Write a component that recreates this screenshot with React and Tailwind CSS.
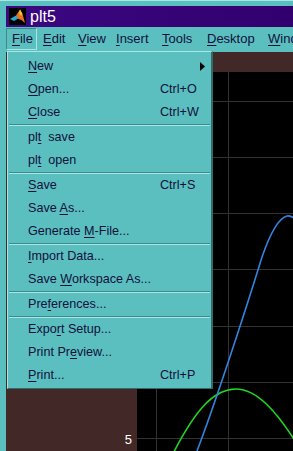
import React from 'react';

const MENUBAR = [
  { label: 'File', u: 0, w: 'w-[31px] pl-[5px] border border-t-[#3a8c8c] border-l-[#3a8c8c] border-r-[#a9e6e6] border-b-[#a9e6e6]' },
  { label: 'Edit', u: 0, w: 'w-[35px] pl-[6px]' },
  { label: 'View', u: 0, w: 'w-[38px] pl-[6px]' },
  { label: 'Insert', u: 0, w: 'w-[46px] pl-[6px]' },
  { label: 'Tools', u: 0, w: 'w-[45px] pl-[6px]' },
  { label: 'Desktop', u: 0, w: 'w-[61px] pl-[6px]' },
  { label: 'Window', u: 0, w: 'w-[60px] pl-[6px]' },
];

// null = separator
const ITEMS = [
  { label: 'New', u: 0, sub: true },
  { label: 'Open...', u: 0, key: 'Ctrl+O' },
  { label: 'Close', u: 0, key: 'Ctrl+W' },
  null,
  { label: 'plt  save', u: 2 },
  { label: 'plt  open', u: 2 },
  null,
  { label: 'Save', u: 0, key: 'Ctrl+S' },
  { label: 'Save As...', u: 5 },
  { label: 'Generate M-File...', u: 9 },
  null,
  { label: 'Import Data...', u: 0 },
  { label: 'Save Workspace As...', u: 5 },
  null,
  { label: 'Preferences...', u: 3 },
  null,
  { label: 'Export Setup...', u: 4 },
  { label: 'Print Preview...', u: 8 },
  { label: 'Print...', u: 0, key: 'Ctrl+P' },
];

function Mnemonic({ text, u }) {
  return (
    <span className="whitespace-pre">
      {text.slice(0, u)}
      <span className="underline decoration-1 underline-offset-[2px]">{text[u]}</span>
      {text.slice(u + 1)}
    </span>
  );
}

function MatlabIcon() {
  return (
    <svg width="17" height="17" viewBox="0 0 17 17">
      <rect width="17" height="17" fill="#000" />
      <polygon points="1,11 7,7.5 10,10 5,13" fill="#2aa9d6" />
      <polygon points="7,7.5 11,1.5 13.5,6 16,15 12.5,12 9.5,11" fill="#e8731c" />
      <polygon points="11,1.5 13.5,6 12,8 10,5" fill="#f6c23a" />
    </svg>
  );
}

export default function App() {
  // green trace, a parabola-ish hump
  const green = 'M28 398 C60 330, 80 317, 99 317 C120 317, 140 340, 160 372';
  const blue = 'M60 379 C75 340, 105 250, 125 185 C133 162, 142 146, 150 144 C153 143.5, 155 144.5, 158 147';
  const hGrid = [29, 85, 141, 197, 254, 310, 366];
  const vGrid = [19, 91];

  return (
    <div className="relative w-[293px] h-[451px] overflow-hidden bg-[#5bbfbf] flex flex-col font-['Liberation_Sans',Arial,sans-serif] text-[13px] text-[#12103c]">
      {/* window top edge */}
      <div className="h-[6px] border-t border-[#a9e6e6] shrink-0" />

      {/* title bar */}
      <div className="ml-[6px] h-[21px] shrink-0 flex items-center bg-gradient-to-r from-[#3c0882] to-[#32006e] pl-[3px]">
        <MatlabIcon />
        <span className="ml-[4px] text-white text-[16px] leading-none">plt5</span>
      </div>

      {/* menu bar */}
      <div className="mt-[1px] h-[22px] shrink-0 flex pl-[6px]">
        {MENUBAR.map((m) => (
          <div key={m.label} className={`h-full flex items-center shrink-0 whitespace-nowrap ${m.w}`}>
            <Mnemonic text={m.label} u={m.u} />
          </div>
        ))}
      </div>
      <div className="h-[2px] shrink-0" />

      {/* figure canvas */}
      <div className="ml-[6px] flex-1 flex bg-[#432828] pl-[131px] pt-[20px]">
        <div className="relative flex-1 bg-black">
          <svg className="absolute inset-0" width="156" height="379" viewBox="0 0 156 379">
            {hGrid.map((y) => (
              <line key={y} x1="0" x2="156" y1={y + 0.5} y2={y + 0.5} stroke="#333" strokeWidth="1" />
            ))}
            {vGrid.map((x) => (
              <line key={x} x1={x + 0.5} x2={x + 0.5} y1="0" y2="379" stroke="#333" strokeWidth="1" />
            ))}
            <path d={green} fill="none" stroke="#1fd81f" strokeWidth="1.6" />
            <path d={blue} fill="none" stroke="#3384de" strokeWidth="1.6" />
          </svg>
          <span className="absolute right-full mr-[5px] top-[361px] text-white text-[13px] leading-[14px]">5</span>
        </div>
      </div>

      {/* File dropdown */}
      <div className="absolute left-[7px] top-[51px] w-[206px] h-[338px] bg-[#5bbfbf] border-l border-t border-[#a9e6e6] border-r-2 border-b border-r-[#2f6c6c] border-b-[#2f6c6c] pt-[3px] text-[12.6px]">
        {ITEMS.map((it, i) =>
          it === null ? (
            <div key={i} className="mx-[1px] h-[2px] border-t border-b border-t-[#3a8c8c] border-b-[#a9e6e6]" />
          ) : (
            <div key={i} className="h-[23px] flex items-center pl-[20px] pr-[6px]">
              <span className="w-[132px] shrink-0">
                <Mnemonic text={it.label} u={it.u} />
              </span>
              {it.key && <span>{it.key}</span>}
              {it.sub && (
                <svg className="ml-auto" width="5" height="9" viewBox="0 0 5 9">
                  <polygon points="0,0 5,4.5 0,9" fill="#000" />
                </svg>
              )}
            </div>
          )
        )}
      </div>
    </div>
  );
}
